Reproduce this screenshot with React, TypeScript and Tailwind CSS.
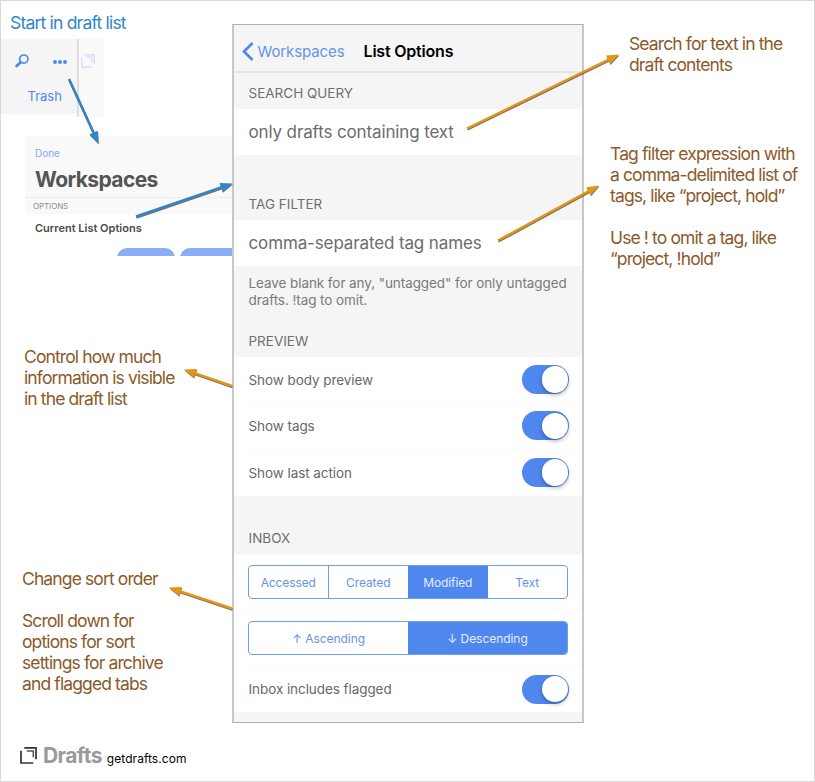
import React from "react";

function Toggle() {
  return (
    <div className="flex h-[29px] w-[47.5px] shrink-0 items-center justify-end rounded-full bg-[#5087ee] pr-[1px]">
      <div className="size-[26.5px] rounded-full bg-white shadow-[0_2px_4px_rgba(0,0,0,0.3)]" />
    </div>
  );
}

function SwitchRow({ label, className = "" }: { label: string; className?: string }) {
  return (
    <div className={`ml-[14.5px] flex shrink-0 items-center justify-between pr-[13px] text-[13.5px] tracking-[-0.07px] text-[#686868] ${className}`}>
      <span className="pt-[1px] whitespace-nowrap">{label}</span>
      <Toggle />
    </div>
  );
}

function Header({ children, className = "" }: { children: React.ReactNode; className?: string }) {
  return (
    <div className={`flex shrink-0 items-end bg-[#f5f5f5] pl-[14.5px] text-[13.5px] leading-[16px] text-[#6f6f70] ${className}`}>
      <span className="whitespace-nowrap">{children}</span>
    </div>
  );
}

function DraftsMark({ className, inner }: { className: string; inner: string }) {
  return (
    <svg viewBox="0 0 17 17" className={className} fill="none" stroke="currentColor" strokeWidth="1.7">
      <path d="M4.3 0.9H16V12.2" />
      <path d="M6.8 3.9H13.3V10.2" stroke={inner} strokeWidth="1.5" />
      <path d="M1 3.8V16H13.3" />
    </svg>
  );
}

function Arrow({ x1, y1, x2, y2, color }: { x1: number; y1: number; x2: number; y2: number; color: string }) {
  const len = Math.hypot(x2 - x1, y2 - y1);
  const angle = (Math.atan2(y2 - y1, x2 - x1) * 180) / Math.PI;
  const shape = `M0 -1.2H${len - 12}V-4.6L${len} 0L${len - 12} 4.6V1.2H0Z`;
  return (
    <g>
      <path d={shape} fill="#444" opacity="0.75" transform={`translate(${x1 + 0.4} ${y1 + 1}) rotate(${angle})`} />
      <path d={shape} fill={color} transform={`translate(${x1} ${y1}) rotate(${angle})`} />
    </g>
  );
}

function Note({ lines, className = "" }: { lines: string[]; className?: string }) {
  return (
    <div className={`text-[17.5px] leading-[21px] tracking-[-0.88px] text-[#8b5a2b] ${className}`}>
      {lines.map((line, i) => (
        <div key={i} className="h-[21px] whitespace-nowrap">{line}</div>
      ))}
    </div>
  );
}

function LeftColumn() {
  return (
    <div className="flex h-full w-[231px] shrink-0 flex-col">
      <div className="mt-[11px] ml-[9px] h-[27px] text-[17.5px] leading-[22px] tracking-[-0.8px] whitespace-nowrap text-[#2f86c8]">
        Start in draft list
      </div>
      <div className="flex h-[78px] w-[103px] items-start">
        <div className="h-[75px] w-[76px] bg-[#f5f5f5] text-[#5087ee]">
          <div className="flex items-start pt-[15px] pl-[13.5px]">
            <svg viewBox="0 0 14 14" className="size-[14px]" fill="none" stroke="currentColor">
              <circle cx="8.8" cy="5.1" r="4.1" strokeWidth="1.7" />
              <path d="M5.7 8.3L1.6 12.1" strokeWidth="2.7" strokeLinecap="round" />
            </svg>
            <div className="mt-[6px] ml-[24px] flex gap-[1px]">
              <i className="size-[4px] rounded-full bg-[#5087ee]" />
              <i className="size-[4px] rounded-full bg-[#5087ee]" />
              <i className="size-[4px] rounded-full bg-[#5087ee]" />
            </div>
          </div>
          <div className="mt-[20px] ml-[26.5px] text-[13px] leading-[16px]">Trash</div>
        </div>
        <div className="h-[78px] w-[2px] bg-[#dedede]" />
        <div className="h-[78px] w-[25px] bg-[#f9f9f9] pt-[15px] pl-[1.5px] text-[#d3dff6]">
          <DraftsMark className="size-[14px]" inner="#d3dff6" />
        </div>
      </div>
      <div className="mt-[19px] ml-[24px] h-[120px] w-[207px] overflow-hidden bg-white">
        <div className="h-[62px] border-b border-[#ececec] bg-[#f9f9f9] pl-[10px]">
          <div className="pt-[11px] text-[10px] leading-[13px] text-[#82a8f2]">Done</div>
          <div className="mt-[7px] text-[21px] leading-[26px] font-bold tracking-[-0.6px] text-[#555]">Workspaces</div>
        </div>
        <div className="h-[16px] bg-[#f9f9f9] pl-[8px] text-[8px] leading-[16px] tracking-[-0.1px] text-[#8b8b8b]">OPTIONS</div>
        <div className="mt-[7px] h-[27px] pl-[10px] text-[11px] leading-[15px] font-semibold whitespace-nowrap text-[#4a4a4a]">
          Current List Options
        </div>
        <div className="ml-[92px] flex gap-[5px]">
          <div className="h-[20px] w-[58px] shrink-0 rounded-[10px] bg-[#8aaef5]" />
          <div className="h-[20px] w-[70px] shrink-0 rounded-[10px] bg-[#8aaef5]" />
        </div>
      </div>
      <Note className="mt-[90px] ml-[23px]" lines={["Control how much", "information is visible", "in the draft list"]} />
      <Note
        className="mt-[159px] ml-[21px]"
        lines={["Change sort order", "", "Scroll down for", "options for sort", "settings for archive", "and flagged tabs"]}
      />
      <div className="mt-[50px] ml-[19px] flex h-[24px] items-start whitespace-nowrap">
        <DraftsMark className="mt-[3px] size-[17px] text-[#333]" inner="#555" />
        <span className="ml-[6px] text-[21px] leading-[24px] font-bold tracking-[-0.6px] text-[#9a9a9a]">Drafts</span>
        <span className="ml-[5px] pt-[7px] text-[12px] leading-[16px] tracking-[0.05px] text-black">getdrafts.com</span>
      </div>
    </div>
  );
}

function Phone() {
  return (
    <div className="mt-[23px] flex h-[698.5px] w-[352px] shrink-0 flex-col border-x-2 border-y border-x-[#c8c8c8] border-y-[#b0b0b0] bg-white">
      <div className="flex h-[48px] shrink-0 items-center border-b-2 border-[#e5e5e5] bg-[#f5f5f5] pt-[7px] pl-[7.5px] whitespace-nowrap">
        <svg viewBox="0 0 12 19" className="h-[19px] w-[12px]" fill="none" stroke="#5087ee" strokeWidth="2.6">
          <path d="M10.6 1L2 9.5L10.6 18" />
        </svg>
        <span className="ml-[4px] pt-[1px] text-[15px] leading-[20px] tracking-[-0.1px] text-[#6494ee]">Workspaces</span>
        <span className="ml-[19px] pb-[1px] text-[16px] leading-[20px] font-semibold tracking-[-0.2px] text-black">List Options</span>
      </div>
      <Header className="h-[36px] pb-[8px]">SEARCH QUERY</Header>
      <div className="flex h-[46px] shrink-0 items-center pt-[1px] pl-[14.5px] text-[17px] tracking-[-0.13px] whitespace-nowrap text-[#6c6c6c]">only drafts containing text</div>
      <Header className="h-[65px] pb-[8px]">TAG FILTER</Header>
      <div className="flex h-[46px] shrink-0 items-center pt-[2px] pl-[14.5px] text-[17px] tracking-[-0.13px] whitespace-nowrap text-[#6c6c6c]">comma-separated tag names</div>
      <div className="h-[54px] shrink-0 bg-[#f5f5f5] pt-[9px] pl-[14.5px] text-[13.5px] leading-[17px] tracking-[-0.08px] whitespace-nowrap text-[#7a7a7d]">
        <div>Leave blank for any, "untagged" for only untagged</div>
        <div>drafts. !tag to omit.</div>
      </div>
      <Header className="h-[37px] pb-[8px]">PREVIEW</Header>
      <SwitchRow label="Show body preview" className="h-[46px] border-b border-[#f8f8f8]" />
      <SwitchRow label="Show tags" className="h-[46.5px] border-b border-[#f8f8f8]" />
      <SwitchRow label="Show last action" className="h-[46px]" />
      <Header className="h-[58.5px] pb-[8px]">INBOX</Header>
      <div className="ml-[14px] flex h-[56px] shrink-0 items-center border-b border-[#f8f8f8] pr-[14px]">
        <div className="grid h-[34px] w-full grid-cols-4 overflow-hidden rounded-[4px] border border-[#6f9cee] text-center text-[12px] leading-[34px] tracking-[-0.1px] text-[#6593e6]">
          <div className="border-r border-[#6f9cee]">Accessed</div>
          <div>Created</div>
          <div className="bg-[#5087ee] text-[#e4edff]">Modified</div>
          <div>Text</div>
        </div>
      </div>
      <div className="ml-[14px] flex h-[56px] shrink-0 items-center border-b border-[#f8f8f8] pr-[14px]">
        <div className="grid h-[34px] w-full grid-cols-2 overflow-hidden rounded-[4px] border border-[#6f9cee] text-center text-[12px] leading-[34px] tracking-[-0.05px] text-[#6593e6]">
          <div>↑ Ascending</div>
          <div className="bg-[#5087ee] text-[#e4edff]">↓ Descending</div>
        </div>
      </div>
      <SwitchRow label="Inbox includes flagged" className="h-[46px]" />
      <div className="flex-1 bg-[#f5f5f5]" />
    </div>
  );
}

export default function App() {
  return (
    <div className="relative flex h-[782px] w-[815px] items-start overflow-hidden border border-[#d9d9d9] bg-white font-['Inter','Liberation_Sans',sans-serif]">
      <LeftColumn />
      <Phone />
      <div className="flex flex-col">
        <Note className="mt-[32px] ml-[45px]" lines={["Search for text in the", "draft contents"]} />
        <Note
          className="mt-[68px] ml-[26px]"
          lines={["Tag filter expression with", "a comma-delimited list of", "tags, like “project, hold”", "", "Use ! to omit a tag, like", "“project, !hold”"]}
        />
      </div>
      <svg className="pointer-events-none absolute -top-px -left-px h-[782px] w-[815px]" viewBox="0 0 815 782">
        <Arrow x1={69} y1={79} x2={98.5} y2={143.5} color="#2f86c8" />
        <Arrow x1={136} y1={216.5} x2={232.5} y2={183.5} color="#2f86c8" />
        <Arrow x1={467} y1={128.5} x2={619} y2={54.5} color="#e59413" />
        <Arrow x1={498} y1={240.5} x2={599} y2={185.5} color="#e59413" />
        <Arrow x1={232} y1={386} x2={184} y2={369.5} color="#e59413" />
        <Arrow x1={232} y1={608.5} x2={169} y2={587.5} color="#e59413" />
      </svg>
    </div>
  );
}
